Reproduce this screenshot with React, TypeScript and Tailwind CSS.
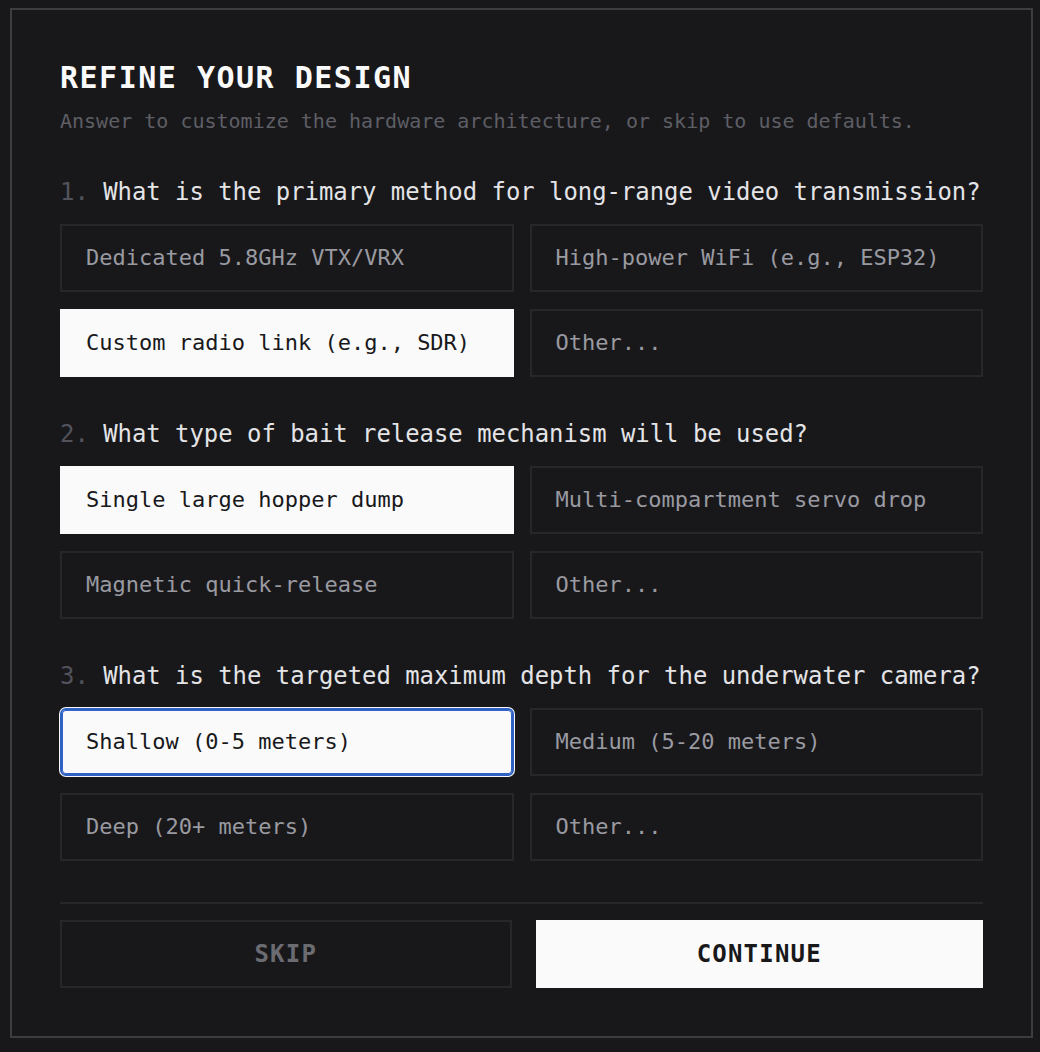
import React, { useState } from 'react';

const mono = "font-['DejaVu_Sans_Mono','Liberation_Mono',monospace]";

interface Question {
  id: number;
  text: string;
  options: string[];
}

const questions: Question[] = [
  {
    id: 1,
    text: 'What is the primary method for long-range video transmission?',
    options: ['Dedicated 5.8GHz VTX/VRX', 'High-power WiFi (e.g., ESP32)', 'Custom radio link (e.g., SDR)', 'Other...'],
  },
  {
    id: 2,
    text: 'What type of bait release mechanism will be used?',
    options: ['Single large hopper dump', 'Multi-compartment servo drop', 'Magnetic quick-release', 'Other...'],
  },
  {
    id: 3,
    text: 'What is the targeted maximum depth for the underwater camera?',
    options: ['Shallow (0-5 meters)', 'Medium (5-20 meters)', 'Deep (20+ meters)', 'Other...'],
  },
];

function OptionButton({ label, selected, focused, onClick }: { label: string; selected: boolean; focused: boolean; onClick: () => void }) {
  let cls = 'border-2 border-[#27272a] bg-transparent text-[#9a9aa1]';
  if (selected) cls = 'border-2 border-[#fafafa] bg-[#fafafa] text-[#18181b]';
  if (focused) cls = 'rounded-[6px] border-2 border-[#2f62c4] bg-[#fafafa] text-[#18181b] shadow-[inset_0_0_0_1px_#2f62c4,0_0_0_1px_#fafafa]';

  return (
    <button
      onClick={onClick}
      className={`flex h-[68px] items-center px-[24px] text-left text-[22px] leading-none outline-none ${cls}`}
    >
      {label}
    </button>
  );
}

export default function App() {
  const [answers, setAnswers] = useState<Record<number, number>>({ 1: 2, 2: 0, 3: 0 });
  const [focusedQ, setFocusedQ] = useState<number>(3);

  return (
    <div className={`min-h-[1052px] bg-[#18181b] pt-[8px] ${mono}`}>
      <div className="ml-[10px] w-[1023px] border-2 border-[#3c3c41] px-[48px] pt-[50px] pb-[48px]">
        <h1 className="text-[30px] font-bold leading-[36px] tracking-[0.05em] text-[#fafafa]">REFINE YOUR DESIGN</h1>
        <p className="mt-[11px] text-[20px] leading-[28px] text-[#5e5e65]">
          Answer to customize the hardware architecture, or skip to use defaults.
        </p>

        <div className="mt-[41px] flex flex-col gap-[41px]">
          {questions.map((q) => (
            <div key={q.id}>
              <h2 className="whitespace-nowrap text-[23.9px] leading-[32px] text-[#e4e4e7]">
                <span className="text-[#52525b]">{q.id}.</span> {q.text}
              </h2>
              <div className="mt-[16px] grid grid-cols-2 gap-x-[16px] gap-y-[17px]">
                {q.options.map((opt, i) => (
                  <OptionButton
                    key={opt + i}
                    label={opt}
                    selected={answers[q.id] === i}
                    focused={focusedQ === q.id && answers[q.id] === i}
                    onClick={() => {
                      setAnswers({ ...answers, [q.id]: i });
                      setFocusedQ(q.id);
                    }}
                  />
                ))}
              </div>
            </div>
          ))}
        </div>

        <div className="mt-[41px] h-[2px] bg-[#27272a]" />

        <div className="mt-[16px] flex gap-[24px]">
          <button className="flex h-[68px] flex-1 items-center justify-center border-2 border-[#27272a] text-[24px] font-bold tracking-[0.05em] text-[#6b6b72]">
            SKIP
          </button>
          <button className="flex h-[68px] flex-1 items-center justify-center bg-[#fafafa] text-[24px] font-bold tracking-[0.05em] text-[#18181b]">
            CONTINUE
          </button>
        </div>
      </div>
    </div>
  );
}
